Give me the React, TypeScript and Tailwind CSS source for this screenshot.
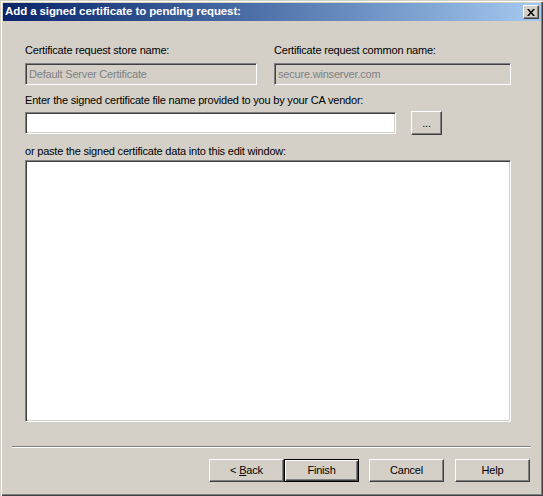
const sunken =
  'border border-t-[#808080] border-l-[#808080] border-b-white border-r-white shadow-[inset_1px_1px_0_#404040,inset_-1px_-1px_0_#d4d0c8]';
const raised =
  'border border-t-white border-l-white border-b-[#404040] border-r-[#404040] shadow-[inset_-1px_-1px_0_#808080] bg-[#d4d0c8]';

const Button = ({ label, isDefault, u }: { label: string; isDefault?: boolean; u?: string }) => (
  <button
    className={`block h-[23px] w-[75px] text-[11px] tracking-[-0.2px] text-black ${
      isDefault
        ? 'border border-black bg-[#d4d0c8] shadow-[inset_1px_1px_0_white,inset_-1px_-1px_0_#404040,inset_-2px_-2px_0_#808080]'
        : raised
    }`}
  >
    {u ? (
      <>
        &lt; <span className="underline">{u}</span>
        {label}
      </>
    ) : (
      label
    )}
  </button>
);

export default function App() {
  return (
    <div className="h-[496px] w-[543px] bg-white">
      <div
        className="flex h-[496px] w-[543px] flex-col bg-[#d4d0c8] pl-[1px] pt-[1px] text-black shadow-[inset_1px_1px_0_#d4d0c8,inset_2px_2px_0_white,inset_-1px_-1px_0_#404040,inset_-2px_-2px_0_#808080]"
        style={{ fontFamily: '"Liberation Sans", Arial, sans-serif' }}
      >
        {/* title bar */}
        <div className="mx-[2px] mt-[2px] flex h-[18px] items-center justify-between bg-gradient-to-r from-[#0a246a] to-[#a6caf0] pl-[2px] pr-[2px]">
          <span className="text-[11.5px] font-bold leading-none tracking-[-0.1px] text-white">
            Add a signed certificate to pending request:
          </span>
          <button className={`flex h-[14px] w-[16px] items-center justify-center ${raised}`}>
            <svg width="8" height="7" viewBox="0 0 8 7">
              <path d="M0 0h2l2 2.5L6 0h2L5 3.5 8 7H6L4 4.5 2 7H0l3-3.5z" fill="#000" />
            </svg>
          </button>
        </div>

        {/* content */}
        <div className="flex flex-1 flex-col pl-[24px] pt-[23px] text-[11px] leading-[13px] tracking-[-0.2px]">
          <div className="flex gap-[17px]">
            <div className="flex w-[232px] flex-col gap-[6px]">
              <span>Certificate request store name:</span>
              <div className={`flex h-[22px] items-center pl-[3px] text-[#808080] ${sunken}`}>
                Default Server Certificate
              </div>
            </div>
            <div className="flex w-[237px] flex-col gap-[6px]">
              <span>Certificate request common name:</span>
              <div className={`flex h-[22px] items-center pl-[3px] text-[#808080] ${sunken}`}>
                secure.winserver.com
              </div>
            </div>
          </div>

          <span className="mt-[9px]">Enter the signed certificate file name provided to you by your CA vendor:</span>
          <div className="mt-[4px] flex items-center gap-[15px]">
            <div className={`h-[22px] w-[371px] bg-white ${sunken}`} />
            <button className={`h-[24px] w-[31px] pt-[1px] text-[11px] ${raised}`}>...</button>
          </div>

          <span className="mt-[10px]">or paste the signed certificate data into this edit window:</span>
          <div className={`mt-[2px] h-[262px] w-[486px] bg-white ${sunken}`} />
        </div>

        {/* separator + buttons */}
        <div className="ml-[11px] mr-[12px] border-t border-b border-t-[#808080] border-b-white" />
        <div className="flex items-start pb-[14px] pl-[208px] pt-[11px]">
          <Button label="ack" u="B" />
          <Button label="Finish" isDefault />
          <div className="ml-[10px]">
            <Button label="Cancel" />
          </div>
          <div className="ml-[11px]">
            <Button label="Help" />
          </div>
        </div>
      </div>
    </div>
  );
}
